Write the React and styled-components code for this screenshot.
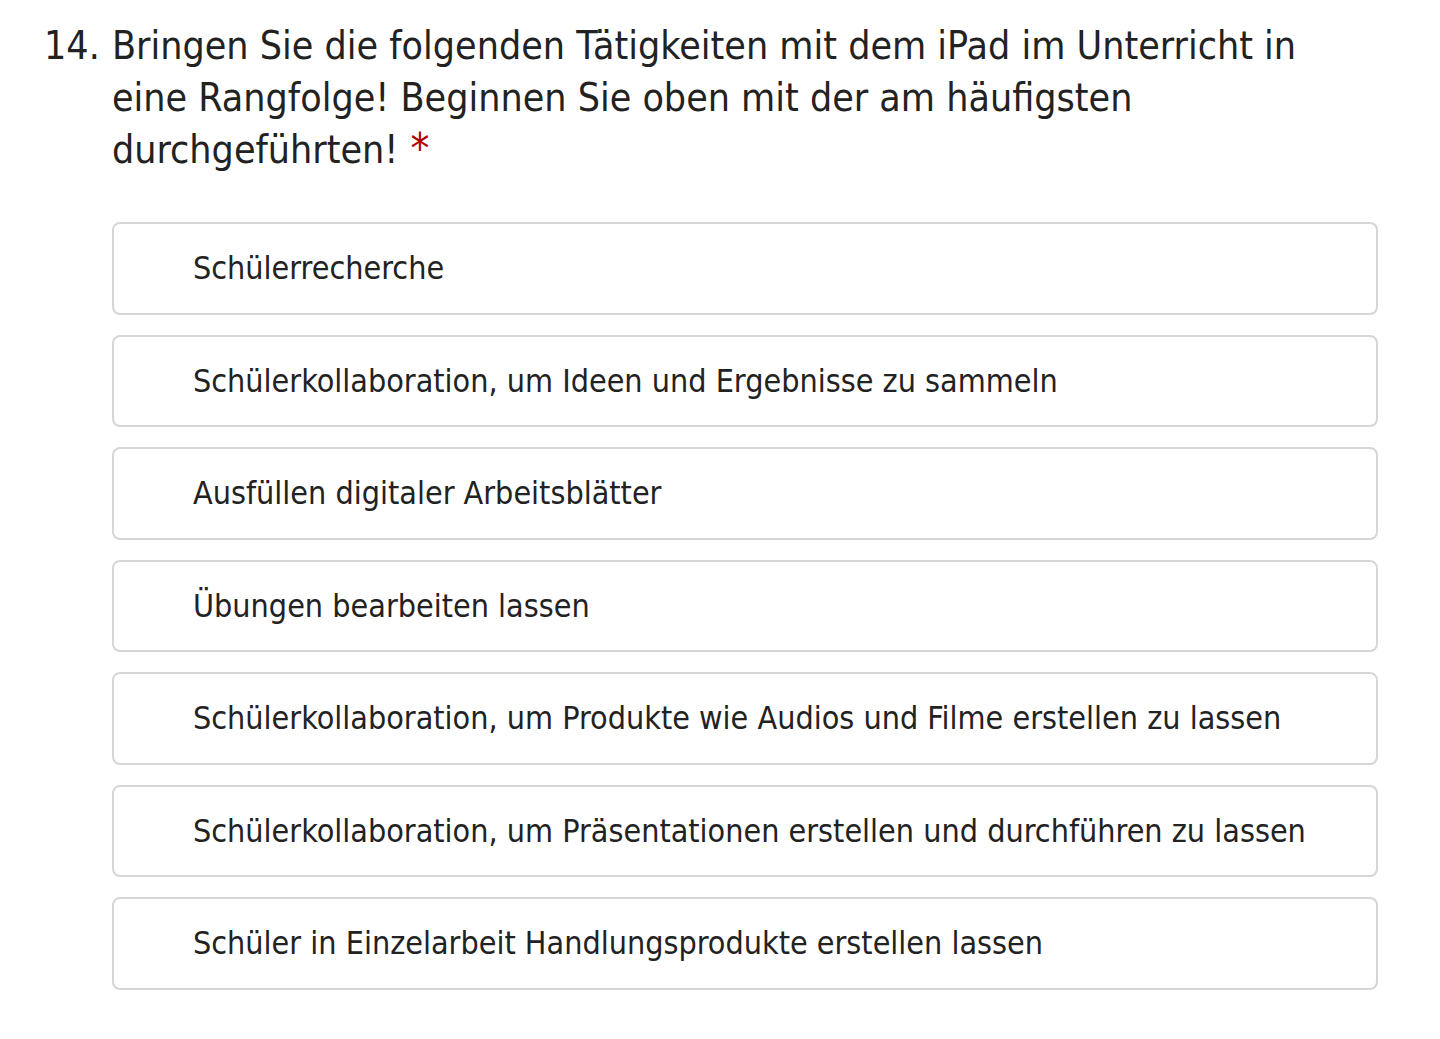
import React from 'react';
import styled, { createGlobalStyle } from 'styled-components';

const GlobalStyle = createGlobalStyle`
  body {
    margin: 0;
    background: #fff;
    font-family: "DejaVu Sans Condensed", "DejaVu Sans", sans-serif;
    color: #222;
  }
`;

const Question = styled.section`
  padding: 20px 62px 0 44px;
`;

const Title = styled.h2`
  display: flex;
  margin: 0;
  padding-right: 20px;
  font-size: 39px;
  font-weight: 400;
  line-height: 52px;
`;

const Number = styled.span`
  width: 68px;
  flex-shrink: 0;
`;

const Required = styled.span`
  margin-left: 12px;
  color: #b20000;
  font-size: 42px;
  line-height: 1;
`;

const List = styled.ol`
  list-style: none;
  margin: 46px 0 0 68px;
  padding: 0;
  display: flex;
  flex-direction: column;
  gap: 20px;
`;

const Item = styled.li`
  height: 88.5px;
  display: flex;
  align-items: center;
  padding-left: 79px;
  border: 2px solid #d6d6d6;
  border-radius: 8px;
  font-size: 32px;
`;

const items = [
  'Schülerrecherche',
  'Schülerkollaboration, um Ideen und Ergebnisse zu sammeln',
  'Ausfüllen digitaler Arbeitsblätter',
  'Übungen bearbeiten lassen',
  'Schülerkollaboration, um Produkte wie Audios und Filme erstellen zu lassen',
  'Schülerkollaboration, um Präsentationen erstellen und durchführen zu lassen',
  'Schüler in Einzelarbeit Handlungsprodukte erstellen lassen',
];

export default function App() {
  return (
    <>
      <GlobalStyle />
      <Question>
        <Title>
          <Number>14.</Number>
          <span>
            Bringen Sie die folgenden Tätigkeiten mit dem iPad im Unterricht in eine
            Rangfolge! Beginnen Sie oben mit der am häufigsten durchgeführten!
            <Required>*</Required>
          </span>
        </Title>
        <List>
          {items.map((text) => (
            <Item key={text}>{text}</Item>
          ))}
        </List>
      </Question>
    </>
  );
}
